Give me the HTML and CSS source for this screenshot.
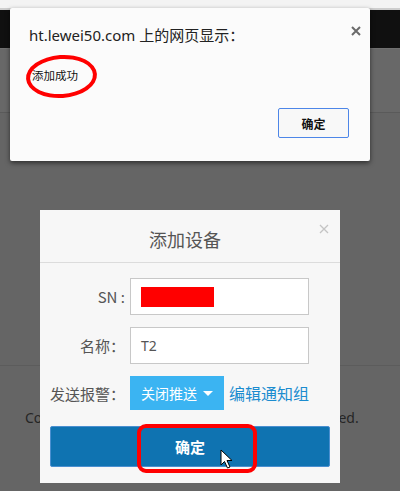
FILE: index.html
```html
<!DOCTYPE html>
<html lang="zh-CN">
<head>
    <meta charset="UTF-8">
    <meta name="viewport" content="width=device-width, initial-scale=1.0">
    <title>添加设备</title>
    <link rel="stylesheet" href="styles.css">
</head>
<body>

<div class="topstrip"></div>
<div class="navbar"></div>
<div class="subbar"></div>
<div class="page-body"></div>
<div class="footer">Copyright © 2015 lewei50.com All Rights Reserved.</div>

<!-- browser alert -->
<div class="alert-box">
    <div class="alert-title">ht.lewei50.com 上的网页显示：</div>
    <span class="alert-close">
        <svg width="10" height="10" viewBox="0 0 10 10"><path d="M1 1L9 9M9 1L1 9" stroke="#6a6a6a" stroke-width="2"/></svg>
    </span>
    <div class="alert-msg">添加成功</div>
    <div class="mark-ellipse"></div>
    <div class="alert-actions">
        <button class="alert-ok">确定</button>
    </div>
</div>

<!-- modal -->
<div class="modal">
    <div class="modal-header">
        <h3>添加设备</h3>
        <span class="modal-close">
            <svg width="10" height="10" viewBox="0 0 10 10"><path d="M1 1L9 9M9 1L1 9" stroke="#c4c4c4" stroke-width="1.3"/></svg>
        </span>
    </div>
    <div class="modal-body">
        <div class="form-row">
            <label>SN :</label>
            <div class="input"><span class="redact"></span></div>
        </div>
        <div class="form-row">
            <label>名称：</label>
            <div class="input">T2</div>
        </div>
        <div class="form-row">
            <label>发送报警：</label>
            <button class="push-btn">关闭推送 <span class="caret"></span></button>
            <a class="group-link" href="#">编辑通知组</a>
        </div>
        <button class="submit-btn">
            确定
            <span class="mark-rect"></span>
            <svg class="cursor" width="14" height="20" viewBox="0 0 14 20">
                <path d="M1 1L1 16L4.5 12.5L7.5 19L10 18L7 11.5L12 11.5Z" fill="#fff" stroke="#000" stroke-width="1"/>
            </svg>
        </button>
    </div>
</div>

</body>
</html>
```

FILE: styles.css
```css
body {
    margin: 0;
    background: #656565;
    font-family: "Noto Sans", "Noto Sans CJK SC", sans-serif;
    height: 491px;
    overflow: hidden;
    position: relative;
}

.topstrip {
    height: 8px;
    background: #f3f3f3;
    border-bottom: 2px solid #cdcdcd;
}

.navbar {
    height: 38px;
    background: #101010;
}

.subbar {
    height: 63px;
    background: #686868;
    border-top: 1px solid #707070;
    border-bottom: 1px solid #5a5a5a;
}

.page-body {
    height: 252px;
    border-bottom: 1px solid #5c5c5c;
}

.footer {
    padding-top: 42px;
    padding-left: 25px;
    font-size: 14px;
    color: #252525;
    white-space: nowrap;
}

/* alert */
.alert-box {
    position: absolute;
    left: 10px;
    top: 8px;
    width: 360px;
    height: 153px;
    background: #fbfbfb;
    border-radius: 2px;
    box-shadow: 0 2px 5px rgba(0, 0, 0, 0.55);
    box-sizing: border-box;
    padding: 16px 19px 0 19px;
}

.alert-title {
    font-size: 15px;
    color: #222;
    line-height: 22px;
}

.alert-close {
    position: absolute;
    right: 9px;
    top: 18px;
    line-height: 0;
}

.alert-msg {
    margin-top: 22px;
    margin-left: 3px;
    font-size: 11.5px;
    color: #111;
    line-height: 16px;
}

.mark-ellipse {
    position: absolute;
    left: 16px;
    top: 47px;
    width: 63px;
    height: 35px;
    border: 4px solid #ff0000;
    border-radius: 50%;
    transform: rotate(-4deg);
}

.alert-actions {
    display: flex;
    justify-content: flex-end;
    margin-top: 24px;
    padding-right: 2px;
}

.alert-ok {
    width: 71px;
    height: 30px;
    background: #f8f8f8;
    border: 1px solid #4d86e8;
    border-radius: 2px;
    font-family: "Noto Sans CJK SC", sans-serif;
    font-size: 12px;
    font-weight: bold;
    color: #111;
}

/* modal */
.modal {
    position: absolute;
    left: 40px;
    top: 210px;
    width: 300px;
    height: 273px;
    background: #f7f7f7;
}

.modal-header {
    height: 53px;
    border-bottom: 1px solid #dcdcdc;
    box-sizing: border-box;
    position: relative;
    display: flex;
    align-items: center;
    justify-content: center;
}

.modal-header h3 {
    margin: 0;
    font-family: "Noto Sans CJK SC", sans-serif;
    font-weight: normal;
    font-size: 18px;
    color: #555;
    padding-top: 6px;
    padding-right: 10px;
}

.modal-close {
    position: absolute;
    right: 11px;
    top: 14px;
    line-height: 0;
}

.modal-body {
    padding: 15px 10px 0 10px;
}

.form-row {
    display: flex;
    align-items: center;
    margin-bottom: 12px;
}

.form-row label {
    width: 75px;
    margin-right: 5px;
    text-align: right;
    font-family: "Noto Sans CJK SC", sans-serif;
    font-size: 15px;
    color: #555;
    flex-shrink: 0;
}

.input {
    width: 179px;
    height: 37px;
    box-sizing: border-box;
    background: #fff;
    border: 1px solid #c8c8c8;
    padding-left: 10px;
    display: flex;
    align-items: center;
    font-size: 14px;
    color: #555;
}

.redact {
    display: block;
    width: 73px;
    height: 20px;
    background: #ff0000;
}

.push-btn {
    width: 94px;
    height: 34px;
    border: none;
    background: #3bb4f2;
    color: #fff;
    font-family: "Noto Sans CJK SC", sans-serif;
    font-size: 14px;
    padding: 0;
    display: flex;
    align-items: center;
    justify-content: center;
    gap: 6px;
}

.caret {
    width: 0;
    height: 0;
    border-left: 5px solid transparent;
    border-right: 5px solid transparent;
    border-top: 5px solid #fff;
}

.group-link {
    margin-left: 5px;
    font-family: "Noto Sans CJK SC", sans-serif;
    font-size: 16px;
    color: #1b8ccf;
    text-decoration: none;
}

.submit-btn {
    position: relative;
    display: block;
    width: 280px;
    height: 41px;
    margin-top: 16px;
    background: #0f73b1;
    border: 1px solid #4a8fd0;
    border-radius: 2px;
    color: #fff;
    font-family: "Noto Sans CJK SC", sans-serif;
    font-size: 15px;
    font-weight: bold;
}

.mark-rect {
    position: absolute;
    left: 86px;
    top: -3px;
    width: 112px;
    height: 41px;
    border: 4px solid #ff0000;
    border-radius: 9px;
}

.cursor {
    position: absolute;
    left: 169px;
    top: 22px;
}
```
